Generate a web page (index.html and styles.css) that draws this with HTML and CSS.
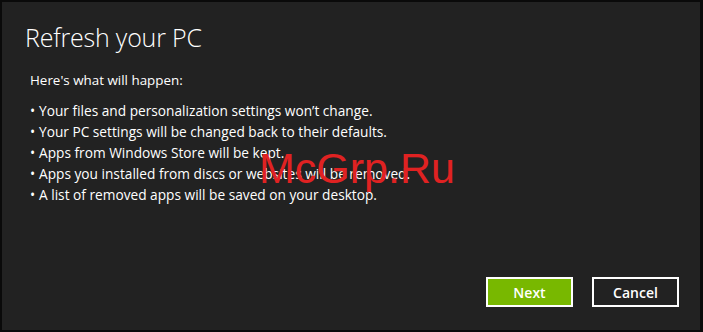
FILE: index.html
```html
<!DOCTYPE html>
<html>
<head>
<meta charset="utf-8">
<link rel="stylesheet" href="styles.css">
</head>
<body>
<div class="dialog">
  <h1 class="title">Refresh your PC</h1>
  <p class="intro">Here's what will happen:</p>
  <ul class="list">
    <li>Your files and personalization settings won’t change.</li>
    <li>Your PC settings will be changed back to their defaults.</li>
    <li>Apps from Windows Store will be kept.</li>
    <li>Apps you installed from discs or websites will be removed.</li>
    <li>A list of removed apps will be saved on your desktop.</li>
  </ul>
  <div class="actions">
    <button class="btn btn-primary">Next</button>
    <button class="btn btn-secondary">Cancel</button>
  </div>
  <div class="watermark">McGrp.Ru</div>
</div>
</body>
</html>
```
FILE: styles.css
```css
html, body {
  margin: 0;
  padding: 0;
  background: #0a0a0a;
}
body {
  width: 703px;
  height: 332px;
  padding: 2px 3px 2px 2px;
  box-sizing: border-box;
}
.dialog {
  position: relative;
  height: 100%;
  background: #222222;
  color: #ffffff;
  font-family: "Open Sans", "Noto Sans", sans-serif;
  display: flex;
  flex-direction: column;
  padding: 0 0 0 23px;
  box-sizing: border-box;
}
.title {
  margin: 17px 0 0 0;
  font-size: 25px;
  font-weight: 300;
  line-height: 36px;
  letter-spacing: -0.2px;
}
.intro {
  margin: 16px 0 0 5px;
  font-size: 13.4px;
  line-height: 18px;
}
.list {
  margin: 11px 0 0 5px;
  padding: 0;
  list-style: none;
  font-size: 13.7px;
  line-height: 21px;
}
.list li::before {
  content: "\2022";
  display: inline-block;
  width: 9px;
}
.actions {
  margin-top: auto;
  margin-bottom: 23px;
  display: flex;
  justify-content: flex-end;
  gap: 19px;
  padding-right: 21px;
}
.btn {
  height: 30px;
  border: 2px solid #ffffff;
  font-family: "Open Sans", sans-serif;
  font-size: 14px;
  font-weight: 600;
  color: #ffffff;
  padding: 0;
  box-sizing: border-box;
}
.btn-primary {
  width: 87px;
  background: #78b800;
}
.btn-secondary {
  width: 87px;
  background: #222222;
}
.watermark {
  position: absolute;
  left: 257px;
  top: 145px;
  font-family: "Liberation Sans", Arial, sans-serif;
  font-size: 43px;
  color: #e02222;
  line-height: 43px;
}
```
